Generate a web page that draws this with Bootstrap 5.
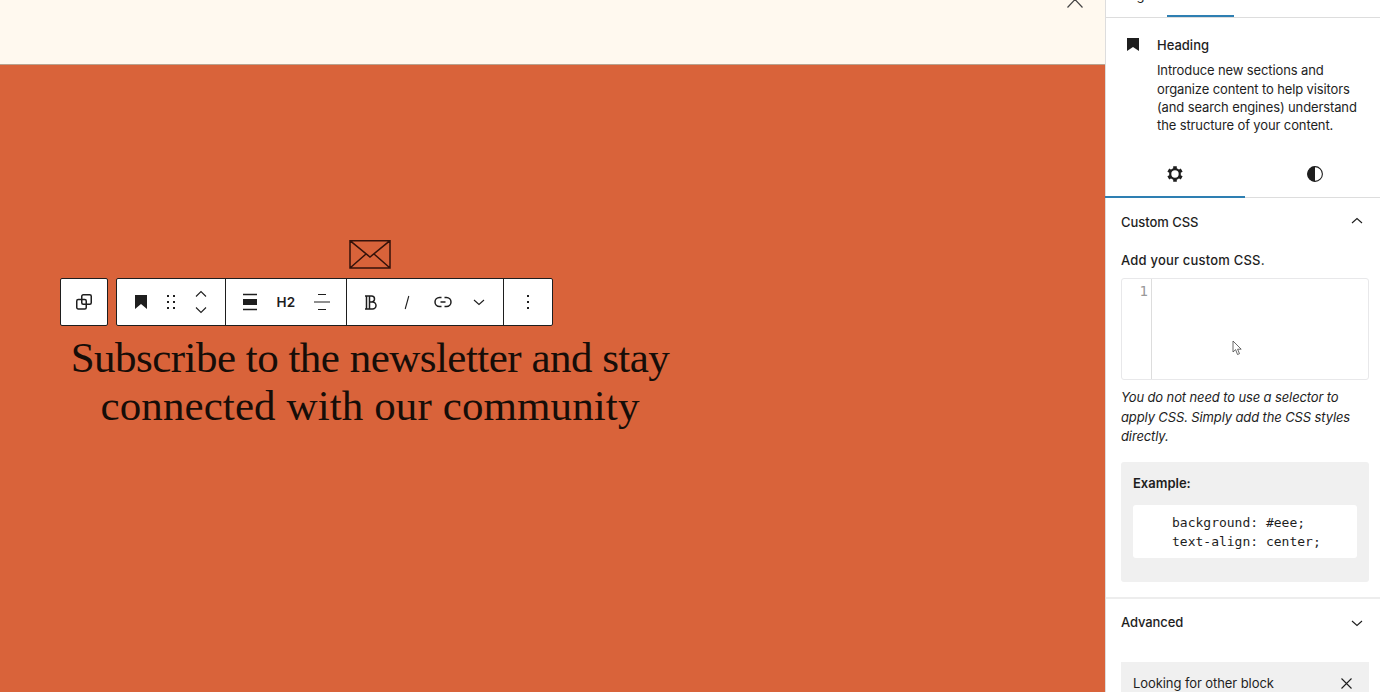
<!DOCTYPE html>
<html lang="en">
<head>
<meta charset="utf-8">
<meta name="viewport" content="width=device-width, initial-scale=1">
<title>Block editor</title>
<link href="https://cdn.jsdelivr.net/npm/bootstrap@5.3.0/dist/css/bootstrap.min.css" rel="stylesheet">
<style>
body{font-family:Inter,"Liberation Sans",sans-serif;font-size:13px;color:#1e1e1e;width:1380px;height:692px;overflow:hidden;background:#fff}
svg{display:block;fill:none;stroke:#1e1e1e;stroke-width:1.5}
svg .solid{fill:#1e1e1e;stroke:none}
svg .thin{stroke-width:1.1}
.canvas{width:1105px;background:#d9633a}
.site-top{height:65px;background:#fff9ef;border-bottom:1px solid #b9a28e}
.site-top svg{margin:-4px 22px 0 0;stroke:#444;stroke-width:1.2}
.signup{width:740px;padding-top:174px}
.signup .envelope{stroke:#35120a;stroke-width:1.5}
.tools{margin:9px 0 0 60px;gap:8px;height:48px}
.tool-box{background:#fff;border:1px solid #1e1e1e;border-radius:2px}
.tool-group+.tool-group{border-left:1px solid #1e1e1e}
.tool-group.format{padding:0 6px}
.tool-btn{width:36px;height:46px;padding:0;border:0;border-radius:0;color:#1e1e1e}
.w28{width:28px}.w32{width:32px}.w40{width:40px}.w46{width:46px}.w48{width:48px}
.level{font-size:13.5px;font-weight:600;letter-spacing:.2px}
.signup h2{font-family:"Liberation Serif",serif;font-size:43px;line-height:48px;font-weight:400;color:#160d08;margin:8px 0 0;white-space:nowrap}
.l1{letter-spacing:-.52px}
.l2{letter-spacing:.1px}
.side{width:275px;border-left:1px solid #ddd;background:#fff}
.side-tabs{height:18px;border-bottom:1px solid #ddd;padding-left:15px}
.side-tabs span{width:46px;height:18px;line-height:18px;margin-top:-14px}
.side-tabs i{width:67px;height:2px;background:#2e7fb2}
.block-info{height:126px;padding:18px 15px 0 15px}
.block-info svg{margin:2px 18px 0 6px}
.block-info .txt{line-height:18.3px;white-space:nowrap;letter-spacing:-.12px}
.block-info .med{margin-bottom:7px;letter-spacing:0}
.icon-tabs{height:54px;border-bottom:1px solid #ddd;margin-left:-1px;overflow-x:clip}
.icon-tab{width:140px;padding-top:21px}
.active-tab{box-shadow:inset 0 -1px #2e7fb2,0 1px #2e7fb2}
.med{font-weight:500}
.px{padding-left:15px;padding-right:11px}
.panel-title{height:48px;padding-right:6px}
.panel-title span{padding-top:1px;letter-spacing:-.05px}
.panel-title svg{margin-top:-3px}
.field-label{height:32px;line-height:28px;letter-spacing:.2px}
.editor{height:102px;border:1px solid #e8e8ea;border-radius:3px;position:relative}
.gutter{width:30px;border-right:1px solid #ddd;color:#999;font:14px/18px "DejaVu Sans Mono",monospace;padding:3px 3px 0 0;text-align:right}
.pointer{position:absolute;left:110px;top:61px}
.hint{font-style:italic;line-height:19.5px;white-space:nowrap;margin:8px 0 0;letter-spacing:-.12px}
.example{margin-top:15px;height:120px;background:#f0f0f0;border-radius:3px;padding:12px}
.example pre{font:13px/19px "DejaVu Sans Mono",monospace;color:#1e1e1e;background:#fff;border-radius:3px;height:53px;margin:11.500px 0 0;padding:8px 0 0 39px}
.advanced{margin-top:15px;height:65px;border-top:2px solid #ededed;padding-top:14px;letter-spacing:-.1px}
.advanced svg{margin:7px 6px 0 0}
.other{height:60px;background:#f0f0f0;padding:12px 13px 0 12px;letter-spacing:-.08px}
.other svg{margin:4px 4px 0 0}
</style>
<script src="https://cdn.jsdelivr.net/npm/bootstrap@5.3.0/dist/js/bootstrap.bundle.min.js"></script>
</head>
<body class="d-flex">
<main class="canvas flex-shrink-0">
  <header class="site-top d-flex justify-content-end">
    <svg width="16" height="14" viewBox="0 0 16 14"><path d="M.5 11.500 8 3.500l7.500 8"/></svg>
  </header>
  <section class="signup">
    <svg class="envelope mx-auto" width="42" height="30" viewBox="0 0 42 30"><path d="M1 1.700h40v27.300H1zM1 1.700 21 18 41 1.700M1 29 17 15M41 29 25 15"/></svg>
    <div class="tools d-flex">
      <div class="tool-box d-flex"><button class="btn tool-btn w46 d-flex align-items-center justify-content-center" aria-label="Select parent"><svg width="18" height="18" viewBox="0 0 18 18"><rect x="1.750" y="6.500" width="9.500" height="9.500" rx="1.500"/><rect x="6.750" y="1.750" width="9.500" height="9.500" rx="1.500"/></svg></button></div>
      <div class="tool-box d-flex">
        <div class="tool-group d-flex px-2">
          <button class="btn tool-btn w32 d-flex align-items-center justify-content-center" aria-label="Heading"><svg width="12" height="14" viewBox="0 0 12 14"><path class="solid" d="M0 0h12v14L6 9 0 14z"/></svg></button>
          <button class="btn tool-btn w28 d-flex align-items-center justify-content-center" aria-label="Drag"><svg width="10" height="16" viewBox="0 0 10 16"><path class="solid" d="M1 1h2v2H1zM7 1h2v2H7zM1 7h2v2H1zM7 7h2v2H7zM1 13h2v2H1zM7 13h2v2H7z"/></svg></button>
          <button class="btn tool-btn w32 d-flex align-items-center justify-content-center" aria-label="Move"><svg width="12" height="24" viewBox="0 0 12 24"><path class="thin" d="m1 6.500 5-5 5 5M1 17.500l5 5 5-5"/></svg></button>
        </div>
        <div class="tool-group d-flex px-2">
          <button class="btn tool-btn w32 d-flex align-items-center justify-content-center" aria-label="Align"><svg width="14" height="18" viewBox="0 0 14 18"><path d="M0 1.500h14M0 16.500h14"/><path class="solid" d="M0 6h14v6H0z"/></svg></button>
          <button class="btn tool-btn w40 level d-flex align-items-center justify-content-center">H2</button>
          <button class="btn tool-btn w32 d-flex align-items-center justify-content-center" aria-label="Align text"><svg width="16" height="18" viewBox="0 0 16 18"><path class="thin" d="M4 1.500h8M0 9h16M4 16.500h8"/></svg></button>
        </div>
        <div class="tool-group format d-flex">
          <button class="btn tool-btn d-flex align-items-center justify-content-center" aria-label="Bold"><svg width="12" height="15" viewBox="0 0 12 15"><path d="M0 1h6.500a2.900 2.900 0 0 1 0 6H4.500M1.500 1v13M4.500 1v13M0 14h7.500a3.300 3.300 0 0 0 0-7"/></svg></button>
          <button class="btn tool-btn d-flex align-items-center justify-content-center" aria-label="Italic"><svg width="6" height="15" viewBox="0 0 6 15"><path class="thin" d="M4.800 1 1.200 14"/></svg></button>
          <button class="btn tool-btn d-flex align-items-center justify-content-center" aria-label="Link"><svg width="18" height="12" viewBox="0 0 18 12"><path d="M7.500 1.500h-2a4.500 4.500 0 0 0 0 9h2M10.500 1.500h2a4.500 4.500 0 0 1 0 9h-2M6.500 6h5"/></svg></button>
          <button class="btn tool-btn d-flex align-items-center justify-content-center" aria-label="More text tools"><svg width="12" height="7" viewBox="0 0 12 7"><path class="thin" d="m1 1 5 4.500L11 1"/></svg></button>
        </div>
        <div class="tool-group d-flex"><button class="btn tool-btn w48 d-flex align-items-center justify-content-center" aria-label="Options"><svg width="2" height="14" viewBox="0 0 2 14"><path class="solid" d="M0 0h2v2H0zM0 6h2v2H0zM0 12h2v2H0z"/></svg></button></div>
      </div>
    </div>
    <h2 class="text-center"><span class="l1">Subscribe to the newsletter and stay</span><br><span class="l2">connected with our community</span></h2>
  </section>
</main>
<aside class="side flex-shrink-0">
  <div class="side-tabs d-flex"><span>Page</span><i class="align-self-end"></i></div>
  <div class="block-info d-flex">
    <svg class="flex-shrink-0" width="12" height="13" viewBox="0 0 12 13"><path class="solid" d="M0 0h12v13L6 9 0 13z"/></svg>
    <div class="txt"><div class="med">Heading</div>Introduce new sections and<br>organize content to help visitors<br>(and search engines) understand<br>the structure of your content.</div>
  </div>
  <div class="icon-tabs d-flex">
    <div class="icon-tab active-tab flex-shrink-0 d-flex justify-content-center"><svg width="18" height="18" viewBox="0 0 18 18"><circle cx="9" cy="9" r="4.800" style="stroke-width:2.200"/><path style="stroke-width:3.600" d="M9 1.300v2.700M9 14v2.700M2.300 5.100l2.400 1.400M13.300 11.500l2.400 1.400M2.300 12.900l2.400-1.400M13.300 6.500l2.400-1.400"/></svg></div>
    <div class="icon-tab flex-shrink-0 d-flex justify-content-center"><svg width="18" height="18" viewBox="0 0 18 18"><circle class="thin" cx="9" cy="9" r="7.400"/><path class="solid" d="M9 1.500a7.500 7.500 0 0 0 0 15z"/></svg></div>
  </div>
  <div class="px">
    <div class="panel-title d-flex justify-content-between align-items-center med"><span>Custom CSS</span><svg width="12" height="7" viewBox="0 0 12 7"><path class="thin" d="m1 6 5-4.500L11 6"/></svg></div>
    <div class="med field-label">Add your custom CSS.</div>
    <div class="editor d-flex"><div class="gutter">1</div>
      <svg class="pointer" width="11" height="16" viewBox="0 0 11 16"><path fill="#fff" style="stroke-width:.8;stroke:#444" d="M1 1v11l2.600-2.400L5.500 14.500l2-.8-1.900-4.500h3.600z"/></svg></div>
    <p class="hint">You do not need to use a selector to<br>apply CSS. Simply add the CSS styles<br>directly.</p>
    <div class="example"><div class="fw-semibold">Example:</div><pre>background: #eee;
text-align: center;</pre></div>
  </div>
  <div class="advanced px d-flex justify-content-between med"><span>Advanced</span><svg width="12" height="7" viewBox="0 0 12 7"><path class="thin" d="m1 1 5 4.500L11 1"/></svg></div>
  <div class="px"><div class="other d-flex justify-content-between"><span>Looking for other block</span><svg width="11" height="11" viewBox="0 0 11 11"><path class="thin" d="m.5.5 10 10M10.500.5l-10 10"/></svg></div></div>
</aside>
</body>
</html>
